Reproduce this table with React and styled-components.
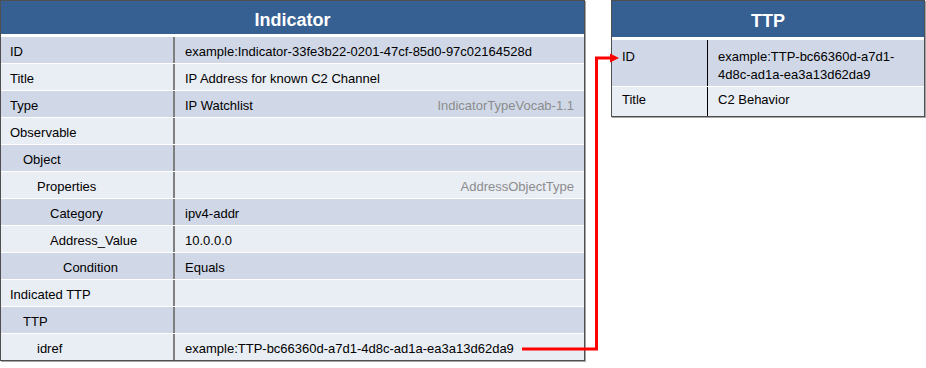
import React from "react";
import styled, { createGlobalStyle } from "styled-components";

const Global = createGlobalStyle`
  html, body { margin: 0; padding: 0; background: #ffffff; }
  body { font-family: "Liberation Sans", Arial, sans-serif; }
`;

const Page = styled.div`
  position: relative;
  width: 926px;
  height: 368px;
  display: flex;
  align-items: flex-start;
  gap: 26px;
  background: #ffffff;
`;

const Table = styled.div`
  box-sizing: border-box;
  width: ${(p) => p.$width}px;
  border: 1px solid #4f4f4f;
  box-shadow: 1px 1px 0 #a6a6a6;
  background: #ffffff;
  display: flex;
  flex-direction: column;
`;

const Header = styled.div`
  box-sizing: border-box;
  height: ${(p) => p.$height}px;
  padding-top: 5px;
  background: #366092;
  color: #ffffff;
  font-weight: bold;
  font-size: 18px;
  display: flex;
  align-items: center;
  justify-content: center;
  border-bottom: 2px solid #ffffff;
`;

const Row = styled.div`
  display: grid;
  grid-template-columns: ${(p) => p.$labelWidth}px 1fr;
  min-height: ${(p) => p.$minHeight}px;
  background: ${(p) => (p.$dark ? "#d0d8e8" : "#e9edf4")};
  border-top: 1px solid #ffffff;
  font-size: 13px;
  line-height: 17.5px;
  color: #000000;
`;

const Label = styled.div`
  box-sizing: border-box;
  padding: ${(p) => p.$padTop}px 6px ${(p) => p.$padBottom}px ${(p) => p.$indent}px;
  display: flex;
  align-items: ${(p) => (p.$top ? "flex-start" : "center")};
  white-space: nowrap;
`;

const Value = styled.div`
  box-sizing: border-box;
  padding: ${(p) => p.$padTop}px 10px ${(p) => p.$padBottom}px;
  border-left: ${(p) => p.$divider};
  display: flex;
  align-items: ${(p) => (p.$top ? "flex-start" : "center")};
  justify-content: space-between;
  gap: 8px;
`;

const Hint = styled.span`
  color: #8c8c8c;
  margin-left: auto;
  white-space: nowrap;
`;

const Connector = styled.svg`
  position: absolute;
  left: 0;
  top: 0;
  pointer-events: none;
`;

const indicatorRows = [
  { label: "ID", level: 0, value: "example:Indicator-33fe3b22-0201-47cf-85d0-97c02164528d" },
  { label: "Title", level: 0, value: "IP Address for known C2 Channel" },
  { label: "Type", level: 0, value: "IP Watchlist", hint: "IndicatorTypeVocab-1.1" },
  { label: "Observable", level: 0 },
  { label: "Object", level: 1 },
  { label: "Properties", level: 2, hint: "AddressObjectType" },
  { label: "Category", level: 3, value: "ipv4-addr" },
  { label: "Address_Value", level: 3, value: "10.0.0.0" },
  { label: "Condition", level: 4, value: "Equals" },
  { label: "Indicated TTP", level: 0 },
  { label: "TTP", level: 1 },
  { label: "idref", level: 2, value: "example:TTP-bc66360d-a7d1-4d8c-ad1a-ea3a13d62da9" },
];

const indents = [9, 22, 36, 49, 62];

export default function App() {
  return (
    <>
      <Global />
      <Page>
        <Table $width={585}>
          <Header $height={35}>Indicator</Header>
          {indicatorRows.map((r, i) => (
            <Row key={r.label} $dark={i % 2 === 0} $labelWidth={172} $minHeight={26}>
              <Label $padTop={6} $padBottom={2} $indent={indents[r.level]}>
                {r.label}
              </Label>
              <Value $padTop={6} $padBottom={2} $divider="2px solid #7f7f7f">
                <span>{r.value || ""}</span>
                {r.hint && <Hint>{r.hint}</Hint>}
              </Value>
            </Row>
          ))}
        </Table>

        <Table $width={314}>
          <Header $height={38}>TTP</Header>
          <Row $dark $labelWidth={95} $minHeight={46}>
            <Label $padTop={8} $padBottom={3} $indent={10} $top>
              ID
            </Label>
            <Value $padTop={8} $padBottom={3} $divider="1px solid #000000" $top>
              <span>
                example:TTP-bc66360d-a7d1-<wbr />4d8c-ad1a-ea3a13d62da9
              </span>
            </Value>
          </Row>
          <Row $labelWidth={95} $minHeight={29}>
            <Label $padTop={4} $padBottom={7} $indent={10} $top>
              Title
            </Label>
            <Value $padTop={4} $padBottom={7} $divider="1px solid #000000" $top>
              <span>C2 Behavior</span>
            </Value>
          </Row>
        </Table>

        <Connector width="926" height="368" viewBox="0 0 926 368">
          <path
            d="M522 349 H596.5 V58 H611"
            fill="none"
            stroke="#ff0000"
            strokeWidth="3"
            strokeLinejoin="miter"
          />
          <polygon points="610,53.5 619,58 610,62.5" fill="#ff0000" />
        </Connector>
      </Page>
    </>
  );
}
